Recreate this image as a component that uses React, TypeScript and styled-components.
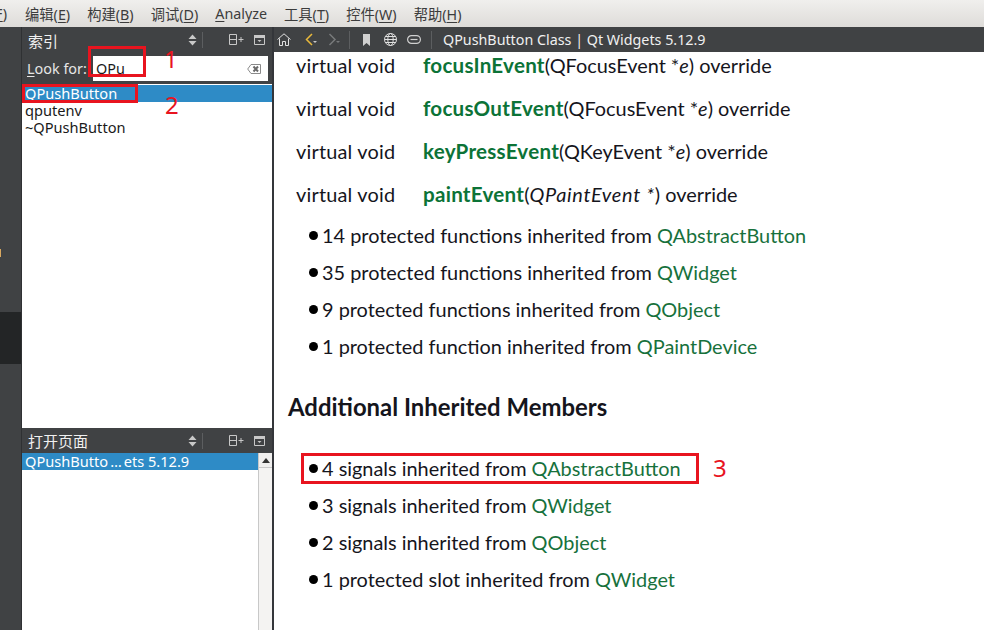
import React from "react";
import styled, { createGlobalStyle } from "styled-components";

const GlobalStyle = createGlobalStyle`
  html, body {
    margin: 0;
    padding: 0;
    width: 984px;
    height: 630px;
    overflow: hidden;
    background: #ffffff;
  }
`;

const Page = styled.div`
  position: relative;
  width: 984px;
  height: 630px;
  display: flex;
  flex-direction: column;
  overflow: hidden;
  font-family: "Noto Sans", "Noto Sans CJK SC", sans-serif;
`;

const MenuBar = styled.div`
  height: 27px;
  flex: none;
  display: flex;
  align-items: center;
  gap: 17px;
  padding-left: 25px;
  background: linear-gradient(#f0efed, #dedcd9);
  color: #3c3c3c;
  font-family: "Noto Sans", "Noto Sans CJK SC", sans-serif;
  font-size: 14.3px;
  position: relative;
`;

const CutMenu = styled.span`
  position: absolute;
  left: -5px;
  top: 4px;
`;

const MenuKey = styled.span`
  text-decoration: underline;
  text-underline-offset: 2px;
`;

const Body = styled.div`
  flex: 1;
  display: flex;
  min-height: 0;
`;

const Rail = styled.div`
  width: 21px;
  flex: none;
  display: flex;
  flex-direction: column;
  background: #404244;
  border-right: 1px solid #2f3133;
`;

const RailMark = styled.div`
  width: 1px;
  height: 8px;
  margin-top: 222px;
  background: #d9a860;
`;

const RailActive = styled.div`
  height: 52px;
  margin-top: 55px;
  background: #232526;
`;

const Sidebar = styled.div`
  width: 250px;
  flex: none;
  display: flex;
  flex-direction: column;
  background: #404244;
`;

const PanelHeader = styled.div<{ $short?: boolean }>`
  height: ${(p) => (p.$short ? 25 : 26)}px;
  flex: none;
  display: flex;
  align-items: center;
  padding: 0 7px 0 6px;
  color: #f0f0f0;
  font-family: "Noto Sans CJK SC", sans-serif;
  font-size: 15px;
`;

const PanelTitle = styled.span`
  flex: 1;
`;

const HeaderDivider = styled.div`
  width: 1px;
  height: 16px;
  margin: 0 26px 0 5px;
  background: #5c5e60;
`;

const SearchRow = styled.div`
  height: 31px;
  flex: none;
  display: flex;
  align-items: center;
  padding: 0 4px 0 5px;
  color: #e6e6e6;
  font-size: 14.4px;
`;

const SearchLabel = styled.span`
  width: 66px;
  flex: none;
`;

const SearchInput = styled.div`
  flex: 1;
  height: 25px;
  display: flex;
  align-items: center;
  justify-content: space-between;
  padding: 0 7px 0 3px;
  background: #ffffff;
  color: #1a1a1a;
`;

const ResultList = styled.div<{ $tall?: boolean }>`
  flex: ${(p) => (p.$tall ? "none" : "1")};
  height: ${(p) => (p.$tall ? "344px" : "auto")};
  padding-top: ${(p) => (p.$tall ? 1 : 0)}px;
  box-sizing: border-box;
  display: flex;
  flex-direction: column;
  background: #ffffff;
  min-height: 0;
`;

const ResultRow = styled.div<{ $selected?: boolean }>`
  height: 17px;
  line-height: 17px;
  padding-left: 3px;
  font-size: 14.6px;
  white-space: nowrap;
  background: ${(p) => (p.$selected ? "#2e8bc6" : "transparent")};
  color: ${(p) => (p.$selected ? "#ffffff" : "#1a1a1a")};
`;

const Ellipsis = styled.span`
  padding: 0 2px;
`;

const OpenPages = styled.div`
  flex: 1;
  display: flex;
  background: #ffffff;
  min-height: 0;
`;

const ScrollBar = styled.div`
  width: 13px;
  flex: none;
  background: #f4f3f2;
  border-left: 1px solid #c8c8c8;
`;

const ScrollButton = styled.div`
  height: 14px;
  display: flex;
  align-items: center;
  justify-content: center;
  background: #f0efee;
  border-bottom: 1px solid #c8c8c8;
`;

const Main = styled.div`
  flex: 1;
  min-width: 0;
  display: flex;
  flex-direction: column;
  border-left: 2px solid #34363a;
`;

const DocToolbar = styled.div`
  height: 25px;
  flex: none;
  display: flex;
  align-items: center;
  padding-left: 3px;
  background: #404244;
  color: #f0f0f0;
  font-size: 14.3px;
`;

const ToolIcon = styled.span<{ $gap?: number }>`
  display: flex;
  margin-right: ${(p) => p.$gap ?? 0}px;
`;

const CloseSlot = styled.span`
  display: flex;
  margin-left: 10px;
`;

const ToolDivider = styled.div<{ $after: number }>`
  width: 1px;
  height: 18px;
  margin-right: ${(p) => p.$after}px;
  background: #5c5e60;
`;

const DocBody = styled.div`
  flex: 1;
  padding: 0 0 0 14px;
  background: #ffffff;
  color: #15151c;
  font-family: "Lato", sans-serif;
  font-size: 19.9px;
`;

const Signature = styled.div`
  display: grid;
  grid-template-columns: 127px 1fr;
  height: 43px;
  line-height: 26px;
  padding-left: 8px;
`;

const ReturnType = styled.span`
  letter-spacing: 0.2px;
`;

const FnLink = styled.b`
  color: #0c7337;
  font-weight: 700;
  font-size: 20.6px;
  letter-spacing: 0.25px;
`;

const WideParam = styled.i`
  letter-spacing: 0.7px;
`;

const Bullets = styled.ul`
  list-style: none;
  margin: 0;
  padding: 0 0 0 21px;
`;

const Bullet = styled.li`
  display: flex;
  align-items: baseline;
  height: 37px;
  line-height: 22px;
  white-space: pre;
`;

const Dot = styled.span`
  width: 9px;
  height: 9px;
  flex: none;
  margin-right: 4px;
  border-radius: 50%;
  background: #000000;
  transform: translateY(-3px);
`;

const DocLink = styled.span`
  color: #17713c;
`;

const Heading = styled.h2`
  margin: 19px 0 34px;
  font-size: 23.9px;
  line-height: 32px;
  font-weight: 700;
  color: #15151c;
`;

const Callout = styled.div<{ $x: number; $y: number; $w: number; $h: number }>`
  position: absolute;
  left: ${(p) => p.$x}px;
  top: ${(p) => p.$y}px;
  width: ${(p) => p.$w}px;
  height: ${(p) => p.$h}px;
  box-sizing: border-box;
  border: 3px solid #e8141f;
`;

const CalloutNumber = styled.span<{ $x: number; $y: number }>`
  position: absolute;
  left: ${(p) => p.$x}px;
  top: ${(p) => p.$y}px;
  font-family: "Noto Sans", sans-serif;
  font-size: 24px;
  line-height: 28px;
  color: #e8141f;
`;

const SortIcon = () => (
  <svg width="9" height="12" viewBox="0 0 9 12">
    <path d="M4.5 .5 8.5 5H.5zM4.5 11.5 .5 7h8z" fill="#c8c8c8" />
  </svg>
);

const SplitIcon = () => (
  <svg width="15" height="12" viewBox="0 0 15 12" fill="none" stroke="#c8c8c8">
    <path d="M.5.5h7v10h-7zM.5 5.5h7M9.5 5.5h5M12 3v5" />
  </svg>
);

const CloseIcon = () => (
  <svg width="11" height="10" viewBox="0 0 11 10" fill="none">
    <path d="M.5.5h10v9H.5z" stroke="#c8c8c8" />
    <path d="M0 0h11v3H0z" fill="#c8c8c8" />
    <path d="M3.5 5h4L5.5 7z" fill="#c8c8c8" />
  </svg>
);

const ClearIcon = () => (
  <svg width="14" height="10" viewBox="0 0 14 10" fill="none">
    <path d="M4 .5h9.5v9H4L.7 5z" stroke="#8a8a8a" />
    <path d="M6.5 2.5l4.5 5M11 2.5l-4.5 5" stroke="#6a6a6a" strokeWidth="2" />
  </svg>
);

const HomeIcon = () => (
  <svg width="14" height="13" viewBox="0 0 14 13" fill="none" stroke="#e0e0e0">
    <path d="M.5 6.5 7 .8l6.5 5.7M2.5 5.5v7h3v-4h3v4h3v-7" />
  </svg>
);

const BackIcon = () => (
  <svg width="13" height="13" viewBox="0 0 13 13" fill="none">
    <path d="M7 1 1.5 6.5 7 12" stroke="#e9b93b" strokeWidth="1.5" />
    <path d="M8 8h4l-2 2z" fill="#c8c8c8" />
  </svg>
);

const ForwardIcon = () => (
  <svg width="13" height="13" viewBox="0 0 13 13" fill="none">
    <path d="M1.5 1 7 6.5 1.5 12" stroke="#77797b" strokeWidth="1.5" />
    <path d="M8 8h4l-2 2z" fill="#77797b" />
  </svg>
);

const BookmarkIcon = () => (
  <svg width="7" height="12" viewBox="0 0 7 12">
    <path d="M0 0h7v12L3.5 9 0 12z" fill="#d0d0d0" />
  </svg>
);

const GlobeIcon = () => (
  <svg width="13" height="13" viewBox="0 0 13 13" fill="none" stroke="#e0e0e0">
    <circle cx="6.5" cy="6.5" r="6" />
    <ellipse cx="6.5" cy="6.5" rx="2.7" ry="6" />
    <path d="M.5 6.5h12M1.4 3.5h10.2M1.4 9.5h10.2" />
  </svg>
);

const LinkIcon = () => (
  <svg width="14" height="9" viewBox="0 0 14 9" fill="none" stroke="#d0d0d0" strokeWidth="1.2">
    <rect x="0.6" y="0.6" width="12.8" height="7.8" rx="3.9" />
    <path d="M3.5 4.5h7" />
  </svg>
);

const UpArrow = () => (
  <svg width="8" height="5" viewBox="0 0 8 5">
    <path d="M4 0l4 5H0z" fill="#333333" />
  </svg>
);

const menus: [string, string][] = [
  ["编辑", "E"],
  ["构建", "B"],
  ["调试", "D"],
];

const menusAfter: [string, string][] = [
  ["工具", "T"],
  ["控件", "W"],
  ["帮助", "H"],
];

const firstInherited: [string, string][] = [
  ["14 protected functions inherited from ", "QAbstractButton"],
  ["35 protected functions inherited from ", "QWidget"],
  ["9 protected functions inherited from ", "QObject"],
  ["1 protected function inherited from ", "QPaintDevice"],
];

const secondInherited: [string, string][] = [
  ["4 signals inherited from ", "QAbstractButton"],
  ["3 signals inherited from ", "QWidget"],
  ["2 signals inherited from ", "QObject"],
  ["1 protected slot inherited from ", "QWidget"],
];

const MenuItem = ({ label, k }: { label: string; k: string }) => (
  <span>
    {label}(<MenuKey>{k}</MenuKey>)
  </span>
);

const PanelActions = () => (
  <>
    <SortIcon />
    <HeaderDivider />
    <SplitIcon />
    <CloseSlot>
      <CloseIcon />
    </CloseSlot>
  </>
);

export default function App() {
  return (
    <Page>
      <GlobalStyle />
      <MenuBar>
        <CutMenu>
          <MenuKey>F</MenuKey>)
        </CutMenu>
        {menus.map(([label, k]) => (
          <MenuItem key={k} label={label} k={k} />
        ))}
        <span>
          <MenuKey>A</MenuKey>nalyze
        </span>
        {menusAfter.map(([label, k]) => (
          <MenuItem key={k} label={label} k={k} />
        ))}
      </MenuBar>

      <Body>
        <Rail>
          <RailMark />
          <RailActive />
        </Rail>

        <Sidebar>
          <PanelHeader>
            <PanelTitle>索引</PanelTitle>
            <PanelActions />
          </PanelHeader>
          <SearchRow>
            <SearchLabel>
              <MenuKey>L</MenuKey>ook for:
            </SearchLabel>
            <SearchInput>
              QPu
              <ClearIcon />
            </SearchInput>
          </SearchRow>
          <ResultList $tall>
            <ResultRow $selected>QPushButton</ResultRow>
            <ResultRow>qputenv</ResultRow>
            <ResultRow>~QPushButton</ResultRow>
          </ResultList>
          <PanelHeader $short>
            <PanelTitle>打开页面</PanelTitle>
            <PanelActions />
          </PanelHeader>
          <OpenPages>
            <ResultList>
              <ResultRow $selected>
                QPushButto<Ellipsis>…</Ellipsis>ets 5.12.9
              </ResultRow>
            </ResultList>
            <ScrollBar>
              <ScrollButton>
                <UpArrow />
              </ScrollButton>
            </ScrollBar>
          </OpenPages>
        </Sidebar>

        <Main>
          <DocToolbar>
            <ToolIcon $gap={14}>
              <HomeIcon />
            </ToolIcon>
            <ToolIcon $gap={10}>
              <BackIcon />
            </ToolIcon>
            <ToolIcon $gap={8}>
              <ForwardIcon />
            </ToolIcon>
            <ToolDivider $after={13} />
            <ToolIcon $gap={14}>
              <BookmarkIcon />
            </ToolIcon>
            <ToolIcon $gap={10}>
              <GlobeIcon />
            </ToolIcon>
            <ToolIcon $gap={10}>
              <LinkIcon />
            </ToolIcon>
            <ToolDivider $after={11} />
            QPushButton Class | Qt Widgets 5.12.9
          </DocToolbar>
          <DocBody>
            <Signature>
              <ReturnType>virtual void</ReturnType>
              <span>
                <FnLink>focusInEvent</FnLink>(QFocusEvent *<i>e</i>) override
              </span>
            </Signature>
            <Signature>
              <ReturnType>virtual void</ReturnType>
              <span>
                <FnLink>focusOutEvent</FnLink>(QFocusEvent *<i>e</i>) override
              </span>
            </Signature>
            <Signature>
              <ReturnType>virtual void</ReturnType>
              <span>
                <FnLink>keyPressEvent</FnLink>(QKeyEvent *<i>e</i>) override
              </span>
            </Signature>
            <Signature>
              <ReturnType>virtual void</ReturnType>
              <span>
                <FnLink>paintEvent</FnLink>(<WideParam>QPaintEvent *</WideParam>) override
              </span>
            </Signature>
            <Bullets>
              {firstInherited.map(([text, link]) => (
                <Bullet key={text}>
                  <Dot />
                  {text}
                  <DocLink>{link}</DocLink>
                </Bullet>
              ))}
            </Bullets>
            <Heading>Additional Inherited Members</Heading>
            <Bullets>
              {secondInherited.map(([text, link]) => (
                <Bullet key={text}>
                  <Dot />
                  {text}
                  <DocLink>{link}</DocLink>
                </Bullet>
              ))}
            </Bullets>
          </DocBody>
        </Main>
      </Body>

      <Callout $x={88} $y={46} $w={58} $h={31} />
      <CalloutNumber $x={164} $y={45}>1</CalloutNumber>
      <Callout $x={22} $y={84} $w={116} $h={19} />
      <CalloutNumber $x={165} $y={91}>2</CalloutNumber>
      <Callout $x={301} $y={453} $w={398} $h={31} />
      <CalloutNumber $x={713} $y={454}>3</CalloutNumber>
    </Page>
  );
}
